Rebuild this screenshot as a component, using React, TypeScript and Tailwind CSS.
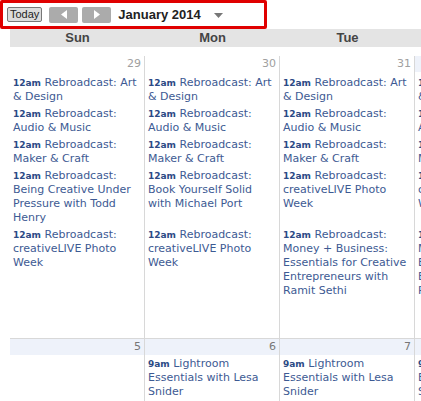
import React from 'react';

type Ev = { time: string; title: string };

// each week: day numbers, then event slots (rows), one entry per day (null = empty)
const weeks: { days: { n: number; other: boolean }[]; rows: (Ev | null)[][] }[] = [
  {
    days: [
      { n: 29, other: true },
      { n: 30, other: true },
      { n: 31, other: true },
      { n: 1, other: false },
    ],
    rows: [
      [
        { time: '12am', title: 'Rebroadcast: Art & Design' },
        { time: '12am', title: 'Rebroadcast: Art & Design' },
        { time: '12am', title: 'Rebroadcast: Art & Design' },
        { time: '12am', title: 'Rebroadcast: Art & Design' },
      ],
      [
        { time: '12am', title: 'Rebroadcast: Audio & Music' },
        { time: '12am', title: 'Rebroadcast: Audio & Music' },
        { time: '12am', title: 'Rebroadcast: Audio & Music' },
        { time: '12am', title: 'Rebroadcast: Audio & Music' },
      ],
      [
        { time: '12am', title: 'Rebroadcast: Maker & Craft' },
        { time: '12am', title: 'Rebroadcast: Maker & Craft' },
        { time: '12am', title: 'Rebroadcast: Maker & Craft' },
        { time: '12am', title: 'Rebroadcast: Maker & Craft' },
      ],
      [
        { time: '12am', title: 'Rebroadcast: Being Creative Under Pressure with Todd Henry' },
        { time: '12am', title: 'Rebroadcast: Book Yourself Solid with Michael Port' },
        { time: '12am', title: 'Rebroadcast: creativeLIVE Photo Week' },
        { time: '12am', title: 'Rebroadcast: creativeLIVE Photo Week' },
      ],
      [
        { time: '12am', title: 'Rebroadcast: creativeLIVE Photo Week' },
        { time: '12am', title: 'Rebroadcast: creativeLIVE Photo Week' },
        { time: '12am', title: 'Rebroadcast: Money + Business: Essentials for Creative Entrepreneurs with Ramit Sethi' },
        { time: '12am', title: 'Rebroadcast: Money + Business: Essentials for Creative Entrepreneurs with Ramit Sethi' },
      ],
    ],
  },
  {
    days: [
      { n: 5, other: false },
      { n: 6, other: false },
      { n: 7, other: false },
      { n: 8, other: false },
    ],
    rows: [
      [
        null,
        { time: '9am', title: 'Lightroom Essentials with Lesa Snider' },
        { time: '9am', title: 'Lightroom Essentials with Lesa Snider' },
        { time: '9am', title: 'Lightroom Essentials with Lesa Snider' },
      ],
    ],
  },
];

const dow = ['Sun', 'Mon', 'Tue', 'Wed'];

function Event({ ev }: { ev: Ev }) {
  return (
    <div className="px-[3px] pt-[1px] pb-[2px] text-[11px] leading-[14px] text-[#3d5a93] font-['DejaVu_Sans',Verdana,sans-serif]">
      <span className="text-[9px] font-bold text-[#2c4a85]">{ev.time}</span> {ev.title}
    </div>
  );
}

export default function App() {
  return (
    <div className="w-[421px] h-[401px] overflow-hidden bg-white font-['Liberation_Sans',Arial,sans-serif]">
      {/* toolbar */}
      <div className="flex items-center h-[29px] w-[267px] border-[3px] border-[#e00000] rounded-[2px] pl-[4px]">
        <button className="h-[15px] px-[2px] text-[11px] leading-[13px] text-[#222] bg-[#dcdcdc] border border-[#777] rounded-[2px]">
          Today
        </button>
        <button className="ml-[7px] h-[16px] w-[29px] bg-[#ababab] rounded-[2px] flex items-center justify-center">
          <svg width="6" height="9" viewBox="0 0 6 9"><path d="M6 0 L0 4.5 L6 9 Z" fill="#fff" /></svg>
        </button>
        <button className="ml-[4px] h-[16px] w-[29px] bg-[#ababab] rounded-[2px] flex items-center justify-center">
          <svg width="6" height="9" viewBox="0 0 6 9"><path d="M0 0 L6 4.5 L0 9 Z" fill="#fff" /></svg>
        </button>
        <span className="ml-[7px] text-[13px] font-bold text-[#222]">January 2014</span>
        <svg className="ml-[13px] mt-[1px]" width="9" height="5" viewBox="0 0 9 5"><path d="M0 0 L9 0 L4.5 5 Z" fill="#777" /></svg>
      </div>

      {/* calendar */}
      <div className="ml-[10px] w-[940px]">
        <div className="grid grid-cols-[repeat(4,135px)] bg-[#e4e4e4] h-[18px]">
          {dow.map((d) => (
            <div key={d} className="text-center text-[13px] font-bold leading-[18px] text-[#444]">
              {d}
            </div>
          ))}
        </div>

        <div className="mt-[9px]">
          {weeks.map((w, wi) => (
            <div
              key={wi}
              className={
                wi === 0
                  ? 'grid grid-cols-[repeat(4,135px)] grid-rows-[auto_auto_auto_auto_auto_auto_1fr] h-[282px]'
                  : 'grid grid-cols-[repeat(4,135px)] border-t border-[#d8d8d8]'
              }
            >
              {w.days.map((d) => (
                <div
                  key={d.n}
                  className={
                    d.other
                      ? 'h-[16px] pr-[3px] text-right text-[11px] leading-[16px] text-[#a0a0a0] border-r border-[#d8d8d8] font-["DejaVu_Sans",Verdana,sans-serif]'
                      : 'h-[16px] pr-[3px] text-right text-[11px] leading-[16px] text-[#777] bg-[#eef2fa] border-r border-[#d8d8d8] font-["DejaVu_Sans",Verdana,sans-serif]'
                  }
                >
                  {d.n}
                </div>
              ))}
              {/* small spacer under the day numbers */}
              {[0, 1, 2, 3].map((k) => (
                <div key={`s${k}`} className={wi === 0 ? 'h-[3px] border-r border-[#d8d8d8]' : 'h-[1px] border-r border-[#d8d8d8]'} />
              ))}
              {w.rows.map((r, ri) =>
                r.map((ev, ci) => (
                  <div key={`${ri}-${ci}`} className="border-r border-[#d8d8d8]">
                    {ev && <Event ev={ev} />}
                  </div>
                ))
              )}
              {wi === 0 &&
                [0, 1, 2, 3].map((k) => <div key={`f${k}`} className="border-r border-[#d8d8d8]" />)}
              {wi === 1 &&
                [0, 1, 2, 3].map((k) => <div key={`f${k}`} className="h-[20px] border-r border-[#d8d8d8]" />)}
            </div>
          ))}
        </div>
      </div>
    </div>
  );
}
